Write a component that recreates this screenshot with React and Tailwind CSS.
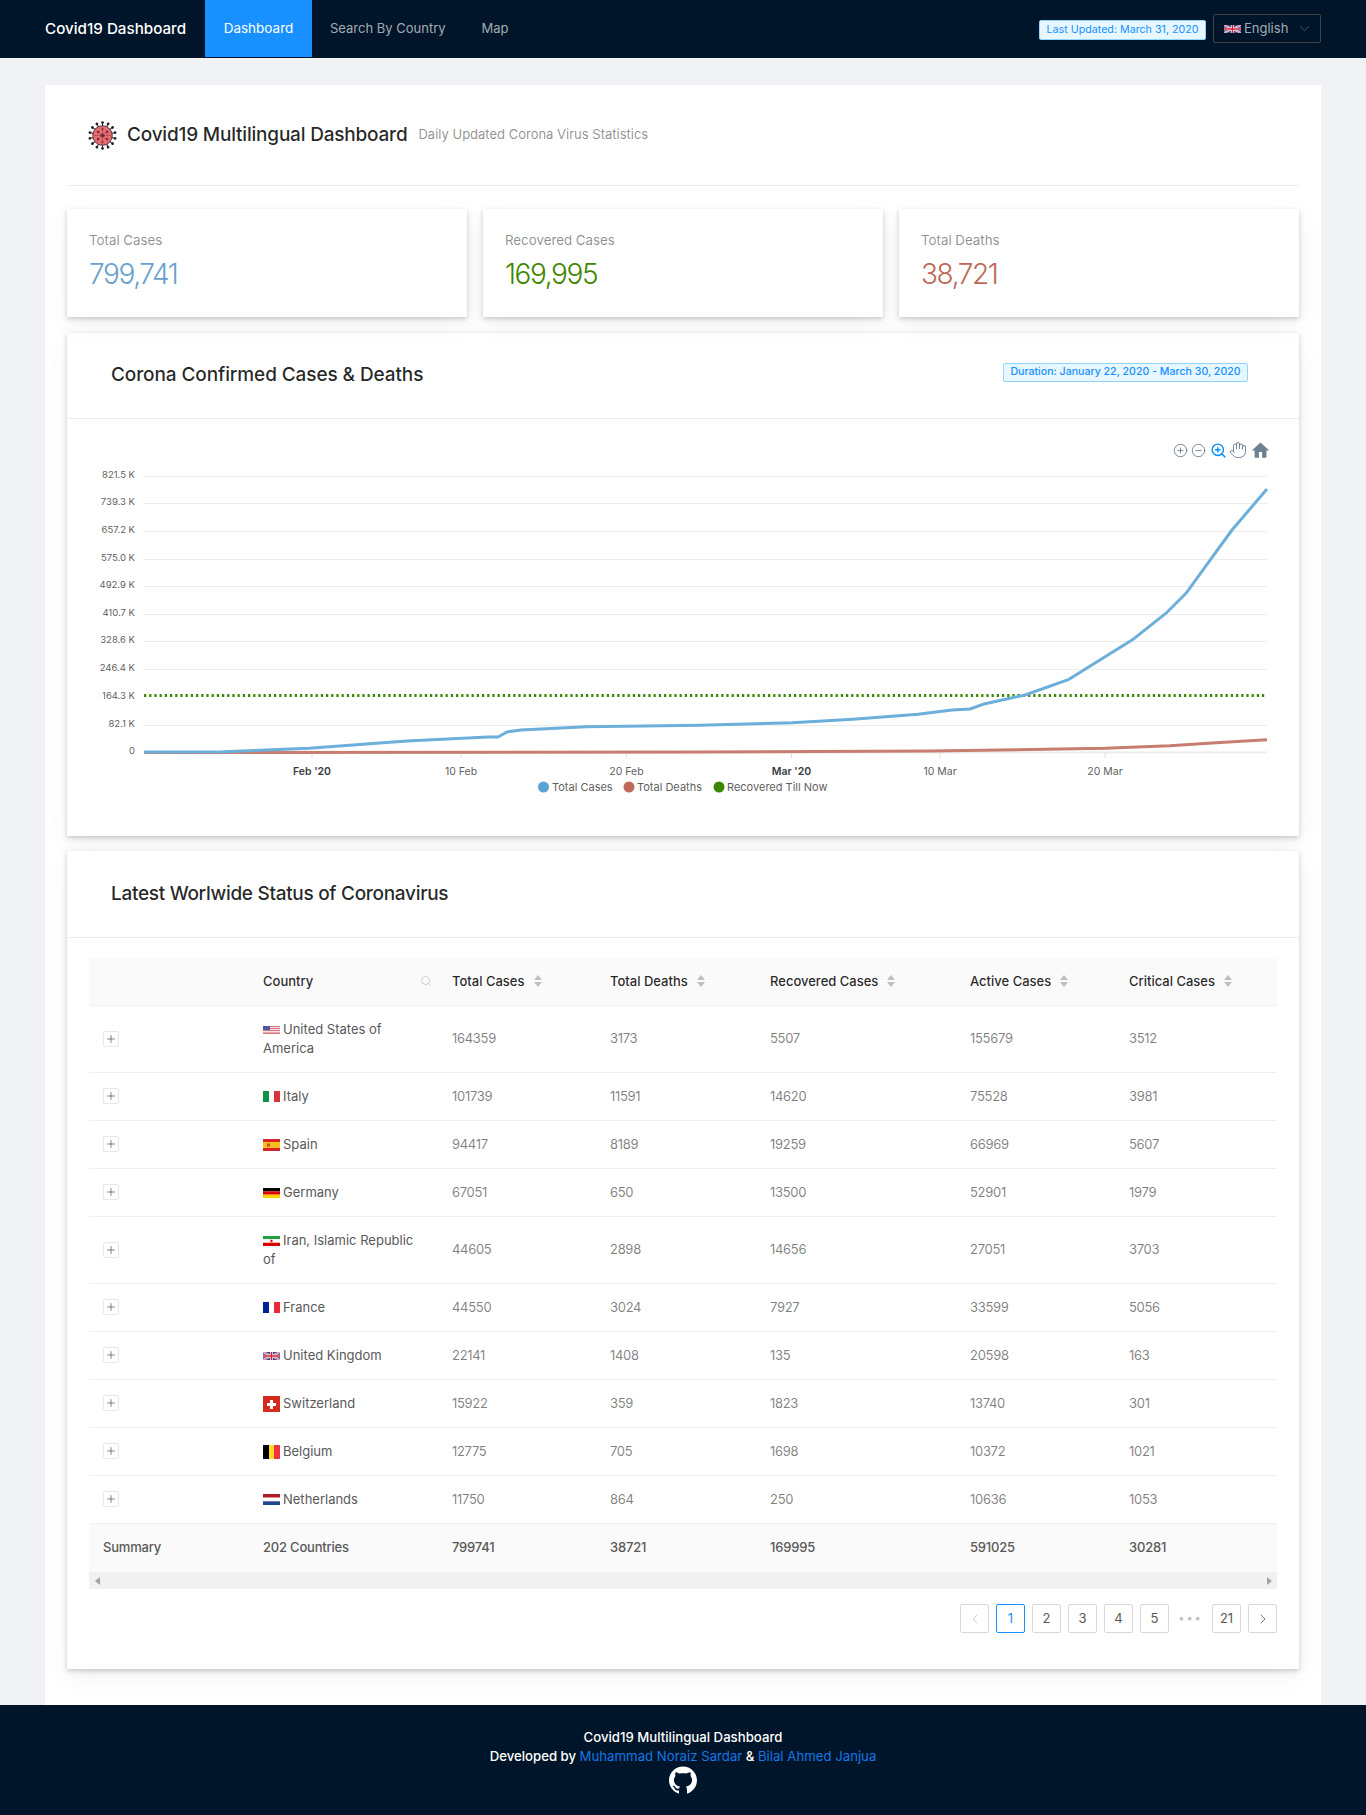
import { ChevronDown, ChevronLeft, ChevronRight, CircleMinus, CirclePlus, Hand, Plus, Search, ZoomIn } from 'lucide-react'
import { AiFillGithub } from 'react-icons/ai'

const rows = [
  ['us', 'United States of America', 164359, 3173, 5507, 155679, 3512],
  ['it', 'Italy', 101739, 11591, 14620, 75528, 3981],
  ['es', 'Spain', 94417, 8189, 19259, 66969, 5607],
  ['de', 'Germany', 67051, 650, 13500, 52901, 1979],
  ['ir', 'Iran, Islamic Republic of', 44605, 2898, 14656, 27051, 3703],
  ['fr', 'France', 44550, 3024, 7927, 33599, 5056],
  ['gb', 'United Kingdom', 22141, 1408, 135, 20598, 163],
  ['ch', 'Switzerland', 15922, 359, 1823, 13740, 301],
  ['be', 'Belgium', 12775, 705, 1698, 10372, 1021],
  ['nl', 'Netherlands', 11750, 864, 250, 10636, 1053],
]

const yLabels = [
  ['821.5 K', 476],
  ['739.3 K', 503],
  ['657.2 K', 531],
  ['575.0 K', 559],
  ['492.9 K', 586],
  ['410.7 K', 614],
  ['328.6 K', 641],
  ['246.4 K', 669],
  ['164.3 K', 697],
  ['82.1 K', 725],
  ['0', 752],
]

const xLabels = [
  ["Feb '20", 312, true],
  ['10 Feb', 461],
  ['20 Feb', 626.5],
  ["Mar '20", 791.5, true],
  ['10 Mar', 940],
  ['20 Mar', 1105],
]

const bluePoints =
  '144,752 223,751.7 309,748.3 407,741 488,737 498,737 507,732 521,730 586,726.7 700,725.3 792,722.7 853,719.3 918,714.3 952,710 970,709 985,703.7 1025,695 1069,679.3 1134,638.7 1167,612.3 1186,593.3 1209,561.7 1232,530 1267,489'
const redPoints = '144,752.5 700,752 930,751 1105,748.3 1170,745.7 1216,742.7 1267,739.7'

function Flag({ code }) {
  if (code === 'us')
    return (
      <svg width="17" height="8" viewBox="0 0 17 8" className="mr-[3px] inline-block">
        <rect width="17" height="8" fill="#f4e4e6" />
        <rect y="0" width="17" height="1" fill="#d9707c" />
        <rect y="2" width="17" height="1" fill="#d9707c" />
        <rect y="4" width="17" height="1" fill="#d9707c" />
        <rect y="6.5" width="17" height="1.5" fill="#d9707c" />
        <rect width="7" height="4" fill="#4a5a9a" />
      </svg>
    )
  if (code === 'it')
    return (
      <svg width="17" height="11" viewBox="0 0 17 11" className="mr-[3px] inline-block">
        <rect width="6" height="11" fill="#0f9348" />
        <rect x="6" width="5" height="11" fill="#fff" />
        <rect x="11" width="6" height="11" fill="#d8323c" />
      </svg>
    )
  if (code === 'es')
    return (
      <svg width="17" height="12" viewBox="0 0 17 12" className="mr-[3px] inline-block">
        <rect width="17" height="12" fill="#d8232a" />
        <rect y="3" width="17" height="6" fill="#f6bf1c" />
        <rect x="4" y="4.5" width="3" height="3" fill="#c8502a" />
      </svg>
    )
  if (code === 'de')
    return (
      <svg width="17" height="10" viewBox="0 0 17 10" className="mr-[3px] inline-block">
        <rect width="17" height="3.4" fill="#000" />
        <rect y="3.4" width="17" height="3.3" fill="#dd0000" />
        <rect y="6.7" width="17" height="3.3" fill="#ffce00" />
      </svg>
    )
  if (code === 'ir')
    return (
      <svg width="17" height="10" viewBox="0 0 17 10" className="mr-[3px] inline-block">
        <rect width="17" height="3.3" fill="#239f40" />
        <rect y="3.3" width="17" height="3.4" fill="#fff" />
        <rect y="6.7" width="17" height="3.3" fill="#da0000" />
        <rect x="7.5" y="3.8" width="2" height="2.4" fill="#da0000" />
      </svg>
    )
  if (code === 'fr')
    return (
      <svg width="17" height="11" viewBox="0 0 17 11" className="mr-[3px] inline-block">
        <rect width="6" height="11" fill="#002395" />
        <rect x="6" width="5" height="11" fill="#fff" />
        <rect x="11" width="6" height="11" fill="#ed2939" />
      </svg>
    )
  if (code === 'gb')
    return (
      <svg width="17" height="8" viewBox="0 0 17 8" className="mr-[3px] inline-block">
        <rect width="17" height="8" fill="#3b4a8c" />
        <path d="M0 0 17 8M17 0 0 8" stroke="#fff" strokeWidth="1.6" />
        <path d="M0 0 17 8M17 0 0 8" stroke="#cf3044" strokeWidth="0.6" />
        <path d="M8.5 0v8M0 4h17" stroke="#fff" strokeWidth="2.6" />
        <path d="M8.5 0v8M0 4h17" stroke="#cf1f3a" strokeWidth="1.4" />
      </svg>
    )
  if (code === 'ch')
    return (
      <svg width="17" height="16" viewBox="0 0 17 16" className="mr-[3px] inline-block">
        <rect width="17" height="16" fill="#d52b1e" />
        <path d="M7 4h3v3h3v3h-3v3H7v-3H4V7h3z" fill="#fff" />
      </svg>
    )
  if (code === 'be')
    return (
      <svg width="17" height="14" viewBox="0 0 17 14" className="mr-[3px] inline-block">
        <rect width="6" height="14" fill="#000" />
        <rect x="6" width="5" height="14" fill="#fdda24" />
        <rect x="11" width="6" height="14" fill="#ef3340" />
      </svg>
    )
  return (
    <svg width="17" height="11" viewBox="0 0 17 11" className="mr-[3px] inline-block">
      <rect width="17" height="3.7" fill="#ae1c28" />
      <rect y="3.7" width="17" height="3.6" fill="#fff" />
      <rect y="7.3" width="17" height="3.7" fill="#21468b" />
    </svg>
  )
}

function VirusLogo() {
  const angles = Array.from({ length: 14 }, (_, i) => (i * 360) / 14)
  return (
    <svg width="29" height="29" viewBox="0 0 29 29">
      {angles.map((a) => (
        <g key={a} transform={`rotate(${a} 14.5 14.5)`}>
          <rect x="14" y="2" width="1" height="4" fill="#2b2326" />
          <circle cx="14.5" cy="1.6" r="1.4" fill="#2b2326" />
        </g>
      ))}
      <circle cx="14.5" cy="14.5" r="9.8" fill="#e56c72" stroke="#2b2326" strokeWidth="0.8" />
      <circle cx="14.5" cy="14.5" r="2" fill="#7a2d36" />
      <circle cx="10" cy="11" r="1.2" fill="#7a2d36" />
      <circle cx="19" cy="11" r="1.2" fill="#7a2d36" />
      <circle cx="10" cy="18" r="1.2" fill="#7a2d36" />
      <circle cx="19" cy="18" r="1.2" fill="#7a2d36" />
      <circle cx="14.5" cy="8" r="1" fill="#7a2d36" />
      <circle cx="14.5" cy="21" r="1" fill="#7a2d36" />
      <path d="M14.5 6v17M6 14.5h17M9 9l11 11M20 9 9 20" stroke="#7a2d36" strokeWidth="0.4" />
    </svg>
  )
}

function StatCard({ label, value, color }) {
  return (
    <div className="h-[108px] bg-white px-[22px] pt-[22px] shadow-[0_2px_5px_rgba(0,0,0,0.2),0_8px_24px_rgba(0,0,0,0.05)]">
      <p className="text-[13.3px] leading-[18px] text-[#00000073]">{label}</p>
      <p className={`mt-[5px] text-[28px] leading-[40px] font-light tracking-[-1.4px] ${color}`}>{value}</p>
    </div>
  )
}

function SortHead({ children }) {
  return (
    <span className="inline-flex items-center">
      {children}
      <svg width="8" height="12" viewBox="0 0 8 12" className="ml-[9px]">
        <path d="M4 0 8 5H0z" fill="#bfbfbf" />
        <path d="M4 12 0 7h8z" fill="#bfbfbf" />
      </svg>
    </span>
  )
}

function PageBtn({ children, active, muted }) {
  return (
    <div
      className={`flex h-[29px] w-[29px] items-center justify-center rounded-[2px] border text-[13px] ${
        active ? 'border-[#1890ff] text-[#1890ff]' : 'border-[#d9d9d9]'
      } ${muted ? 'text-[#bfbfbf]' : ''} ${!active && !muted ? 'text-[#595959]' : ''}`}
    >
      {children}
    </div>
  )
}

function Chart() {
  return (
    <svg width="1232" height="376" viewBox="67 459 1232 376" className="block">
      {yLabels.map(([label, y]) => (
        <g key={label}>
          <line x1="144" x2="1267" y1={y + 0.5} y2={y + 0.5} stroke={y === 697 ? '#ffffff' : '#ececec'} strokeWidth={y === 752 ? 2 : 1} />
          <text x="135" y={y + 2} textAnchor="end" fontSize="9.5" fill="#5f5f5f">
            {label}
          </text>
        </g>
      ))}
      {xLabels.map(([label, x, bold]) => (
        <g key={label}>
          <line x1={x} x2={x} y1="752" y2="758" stroke="#e0e0e0" />
          <text x={x} y="775" textAnchor="middle" fontSize="10.5" fontWeight={bold ? 600 : 400} fill={bold ? '#373d3f' : '#5f5f5f'}>
            {label}
          </text>
        </g>
      ))}
      <line x1="144" x2="1267" y1="695.5" y2="695.5" stroke="#3f8600" strokeWidth="3" strokeDasharray="2.2 3" />
      <polyline points={redPoints} fill="none" stroke="#c77d70" strokeWidth="3" />
      <polyline points={bluePoints} fill="none" stroke="#6cafda" strokeWidth="3" strokeLinejoin="round" />
      <circle cx="543.5" cy="787" r="5.5" fill="#5aa3d6" />
      <text x="552" y="791" fontSize="11" fill="#5f5f5f">
        Total Cases
      </text>
      <circle cx="629" cy="787" r="5.5" fill="#c0685a" />
      <text x="637" y="791" fontSize="11" fill="#5f5f5f">
        Total Deaths
      </text>
      <circle cx="719" cy="787" r="5.5" fill="#3f8600" />
      <text x="727" y="791" fontSize="11" fill="#5f5f5f">
        Recovered Till Now
      </text>
    </svg>
  )
}

export default function App() {
  return (
    <div className="flex min-h-[1815px] flex-col bg-[#f0f2f5] font-[Inter,sans-serif]">
      <header className="flex h-[58px] items-start bg-[#001529] pr-[45px] pl-[45px]">
        <div className="w-[160px] text-[15.2px] leading-[57px] font-medium text-white">Covid19 Dashboard</div>
        <nav className="flex text-[13px] text-[#ffffffa6]">
          <a className="flex h-[57px] w-[107px] items-center justify-center bg-[#1890ff] text-[13.5px] text-white">Dashboard</a>
          <a className="flex h-[57px] items-center pr-[18px] pl-[18px]">Search By Country</a>
          <a className="flex h-[57px] items-center pl-[18px]">Map</a>
        </nav>
        <div className="mt-[14px] ml-auto flex items-start">
          <span className="mt-[6px] flex h-[20px] w-[167px] items-center justify-center rounded-[2px] border border-[#91d5ff] bg-[#e6f7ff] text-[10.7px] whitespace-nowrap text-[#1890ff]">
            Last Updated: March 31, 2020
          </span>
          <div className="ml-[7px] flex h-[29px] w-[108px] items-center rounded-[2px] border border-[#434343] pr-[7px] pl-[10px] text-[13px] text-[#ffffffa6]">
            <Flag code="gb" />
            English
            <ChevronDown size={17} strokeWidth={1} className="ml-auto text-[#ffffff60]" />
          </div>
        </div>
      </header>

      <main className="flex-1 pt-[27px] pr-[45px] pl-[45px]">
        <div className="bg-white pr-[22px] pb-[36px] pl-[22px]">
          <div className="flex h-[101px] items-center border-b border-[#ececec] pl-[21px]">
            <VirusLogo />
            <h1 className="ml-[10px] text-[19px] font-medium tracking-[-0.2px] text-[#000000d9]">Covid19 Multilingual Dashboard</h1>
            <span className="ml-[11px] text-[13px] text-[#00000073]">Daily Updated Corona Virus Statistics</span>
          </div>

          <div className="mt-[23px] grid grid-cols-3 gap-4">
            <StatCard label="Total Cases" value="799,741" color="text-[#6a9fcb]" />
            <StatCard label="Recovered Cases" value="169,995" color="text-[#3f8600]" />
            <StatCard label="Total Deaths" value="38,721" color="text-[#bc6757]" />
          </div>

          <section className="mt-[16px] h-[503px] bg-white shadow-[0_2px_5px_rgba(0,0,0,0.2),0_8px_24px_rgba(0,0,0,0.05)]">
            <div className="flex h-[86px] items-center justify-between border-b border-[#ececec] pr-[51px] pl-[44px]">
              <h2 className="text-[19px] font-medium tracking-[-0.1px] text-[#000000d9]">Corona Confirmed Cases &amp; Deaths</h2>
              <span className="mb-[7px] flex h-[19px] w-[245px] items-center justify-center rounded-[2px] border border-[#91d5ff] bg-[#e6f7ff] text-[10.6px] font-medium whitespace-nowrap text-[#1890ff]">
                Duration: January 22, 2020 - March 30, 2020
              </span>
            </div>
            <div className="flex h-[40px] items-start justify-end pt-[22px] pr-[29px]">
              <CirclePlus size={15} strokeWidth={1.3} className="mt-[2px] text-[#5f7385]" />
              <CircleMinus size={15} strokeWidth={1.3} className="mt-[2px] ml-[3px] text-[#5f7385]" />
              <ZoomIn size={17} strokeWidth={2} className="mt-[1px] ml-[4px] text-[#008ffb]" />
              <Hand size={18} strokeWidth={1.3} className="ml-[2px] text-[#6e8192]" />
              <svg width="19" height="19" viewBox="0 0 24 24" className="ml-[4px]" fill="#6e8192">
                <path d="M10 21v-7h4v7h5.5v-9H23L12 2 1 12h3.5v9z" />
              </svg>
            </div>
            <Chart />
          </section>

          <section className="mt-[15px] h-[818px] bg-white shadow-[0_2px_5px_rgba(0,0,0,0.2),0_8px_24px_rgba(0,0,0,0.05)]">
            <div className="flex h-[87px] items-center border-b border-[#ececec] pl-[44px]">
              <h2 className="text-[19px] font-medium tracking-[-0.3px] text-[#000000d9]">Latest Worlwide Status of Coronavirus</h2>
            </div>
            <div className="pt-[20px] pr-[22px] pl-[22px]">
              <table className="w-[1188px] table-fixed border-collapse text-[13px] leading-[19px] text-[#595959]">
                <colgroup>
                  <col className="w-[159px]" />
                  <col className="w-[188px]" />
                  <col className="w-[158px]" />
                  <col className="w-[160px]" />
                  <col className="w-[200px]" />
                  <col className="w-[159px]" />
                  <col />
                </colgroup>
                <thead>
                  <tr className="h-[47px] border-b border-[#f0f0f0] bg-[#fafafa] text-left font-medium text-[#000000d9]">
                    <th />
                    <th className="pl-[15px] font-medium">
                      <span className="flex items-center justify-between pr-[4px]">
                        Country
                        <Search size={12} strokeWidth={1.5} className="text-[#bfbfbf]" />
                      </span>
                    </th>
                    <th className="pl-4 font-medium">
                      <SortHead>Total Cases</SortHead>
                    </th>
                    <th className="pl-4 font-medium">
                      <SortHead>Total Deaths</SortHead>
                    </th>
                    <th className="pl-4 font-medium">
                      <SortHead>Recovered Cases</SortHead>
                    </th>
                    <th className="pl-4 font-medium">
                      <SortHead>Active Cases</SortHead>
                    </th>
                    <th className="pl-4 font-medium">
                      <SortHead>Critical Cases</SortHead>
                    </th>
                  </tr>
                </thead>
                <tbody>
                  {rows.map(([code, name, ...nums]) => (
                    <tr key={code} className="border-b border-[#f0f0f0]">
                      <td className="py-[14px] pl-[14px]">
                        <span className="flex h-[16px] w-[16px] items-center justify-center rounded-[2px] border border-[#e8e8e8] text-[#333]">
                          <Plus size={12} strokeWidth={1.2} />
                        </span>
                      </td>
                      <td className="py-[14px] pr-4 pl-[15px]">
                        <Flag code={code} />
                        {name}
                      </td>
                      {nums.map((n, i) => (
                        <td key={i} className="py-[14px] pl-4 tracking-[-0.3px] text-[#00000080]">
                          {n}
                        </td>
                      ))}
                    </tr>
                  ))}
                  <tr className="h-[49px] bg-[#fafafa] font-medium tracking-[-0.2px]">
                    <td className="pl-[14px]">Summary</td>
                    <td className="pl-[15px]">202 Countries</td>
                    <td className="pl-4">799741</td>
                    <td className="pl-4">38721</td>
                    <td className="pl-4">169995</td>
                    <td className="pl-4">591025</td>
                    <td className="pl-4">30281</td>
                  </tr>
                </tbody>
              </table>
              <div className="flex h-[17px] w-[1188px] items-center justify-between bg-[#f1f1f1] pr-[5px] pl-[6px]">
                <svg width="5" height="8" viewBox="0 0 5 8">
                  <path d="M5 0v8L0 4z" fill="#a3a3a3" />
                </svg>
                <svg width="5" height="8" viewBox="0 0 5 8">
                  <path d="M0 0v8l5-4z" fill="#a3a3a3" />
                </svg>
              </div>
              <div className="mt-[15px] flex w-[1188px] justify-end gap-[7px]">
                <PageBtn muted>
                  <ChevronLeft size={16} strokeWidth={1.2} />
                </PageBtn>
                <PageBtn active>1</PageBtn>
                <PageBtn>2</PageBtn>
                <PageBtn>3</PageBtn>
                <PageBtn>4</PageBtn>
                <PageBtn>5</PageBtn>
                <div className="flex h-[29px] w-[29px] items-center justify-center text-[11px] tracking-[2px] text-[#bfbfbf]">•••</div>
                <PageBtn>21</PageBtn>
                <PageBtn>
                  <ChevronRight size={16} strokeWidth={1.2} />
                </PageBtn>
              </div>
            </div>
          </section>
        </div>
      </main>

      <footer className="flex h-[110px] flex-col items-center bg-[#001529] pt-[23px] text-[13.2px] leading-[19px] font-medium text-white">
        <p>Covid19 Multilingual Dashboard</p>
        <p>
          Developed by <a className="font-normal text-[#1677e8]">Muhammad Noraiz Sardar</a> &amp;{' '}
          <a className="font-normal text-[#1677e8]">Bilal Ahmed Janjua</a>
        </p>
        <AiFillGithub size={32} className="-mt-[2px]" />
      </footer>
    </div>
  )
}
